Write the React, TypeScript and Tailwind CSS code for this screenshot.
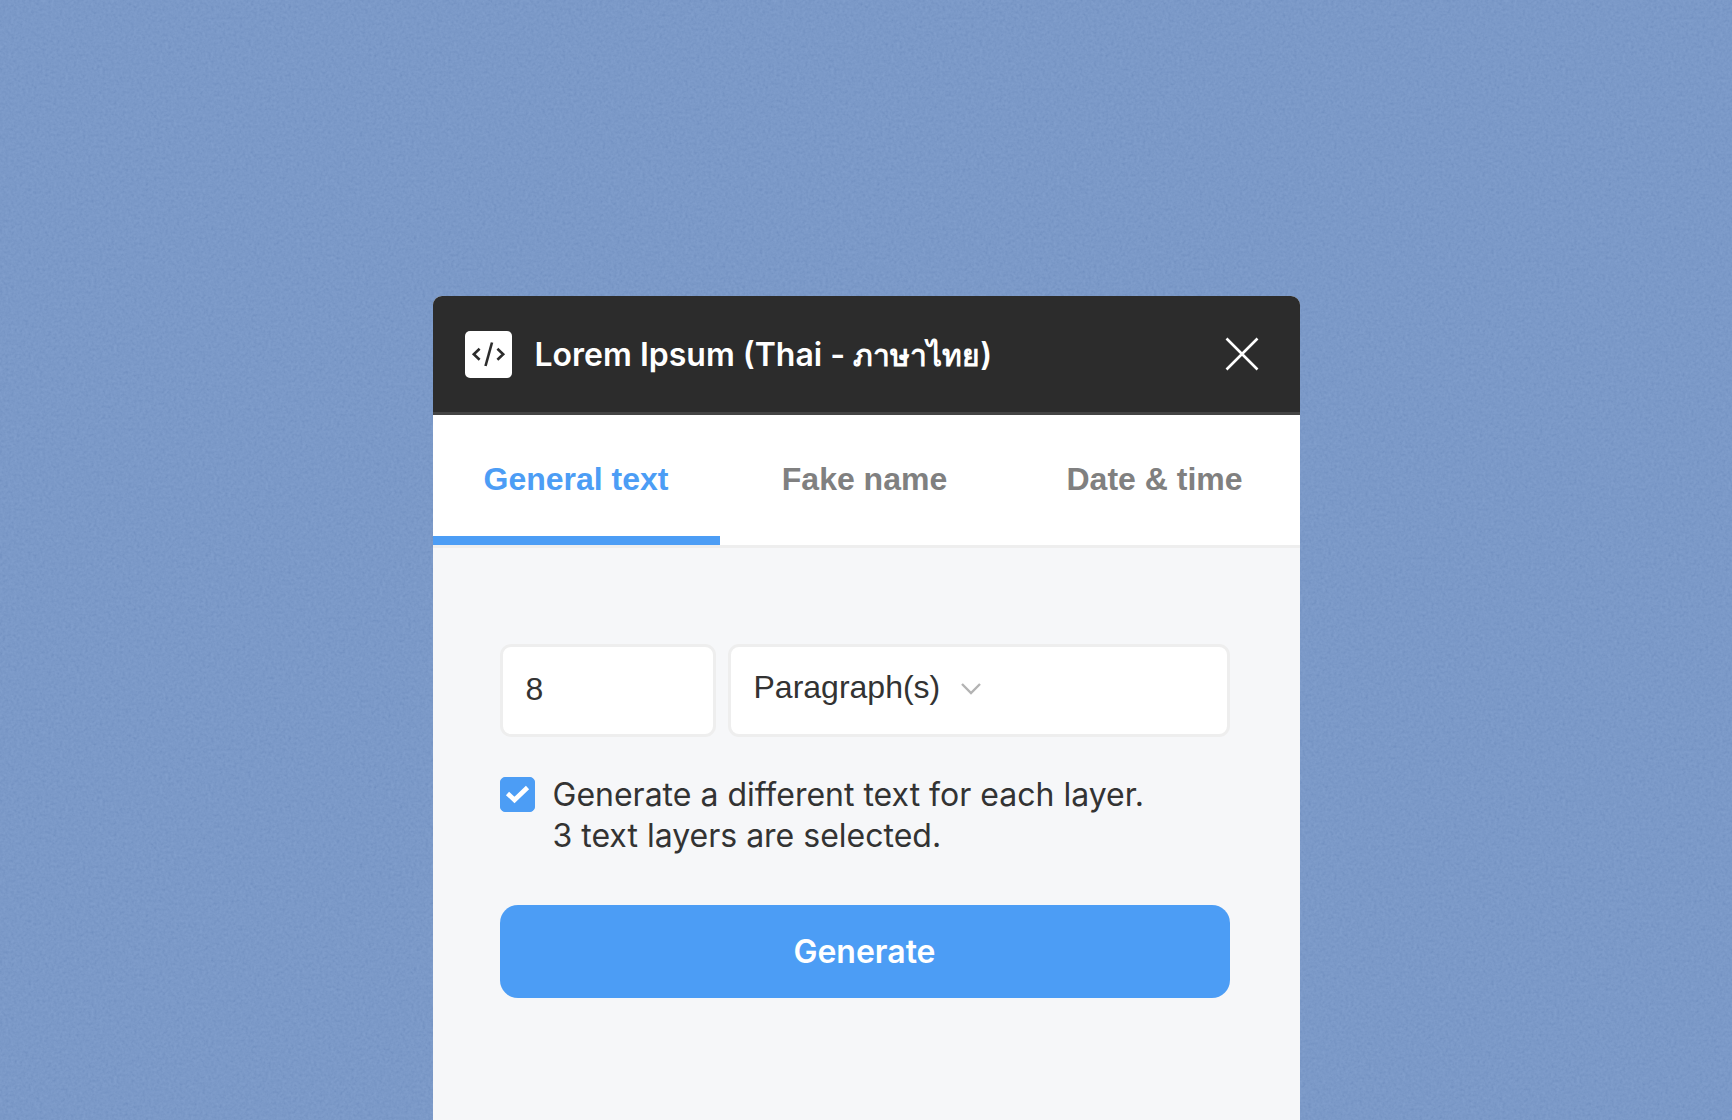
import { useState } from "react";

const tabs = ["General text", "Fake name", "Date & time"];

function GrainBackdrop() {
  return (
    <svg className="absolute inset-0 h-full w-full opacity-15" aria-hidden="true">
      <filter id="grain">
        <feTurbulence type="fractalNoise" baseFrequency="0.35" numOctaves={2} seed={4} />
        <feColorMatrix values="0.5 0.5 0 0 0  0.5 0.5 0 0 0.05  0.5 0.5 0 0 0.25  0 0 0 0 1" />
      </filter>
      <rect width="100%" height="100%" filter="url(#grain)" />
    </svg>
  );
}

function CodeIcon() {
  return (
    <span className="flex size-[47px] items-center justify-center rounded-[5px] bg-white">
      <svg width="47" height="47" viewBox="0 0 47 47" fill="none" stroke="#2c2c2c" strokeWidth="2.6" aria-hidden="true">
        <path d="M14.6 17.8 8.8 23.3l5.8 5.5M32.4 17.8l5.8 5.5-5.8 5.5" />
        <path d="M27 11.5 20.5 35" />
      </svg>
    </span>
  );
}

function Header() {
  return (
    <header className="flex h-[119px] items-center border-b-3 border-[#444444] bg-[#2c2c2c] pr-10 pl-8">
      <CodeIcon />
      <h1 className="ml-[23px] flex-1 pt-px font-['Inter',sans-serif] text-[32px] leading-10 font-semibold text-white">
        Lorem Ipsum (Thai - <span className="text-[30px]">ภาษาไทย</span>)
      </h1>
      <button type="button" aria-label="Close">
        <svg width="36" height="36" viewBox="0 0 36 36" fill="none" stroke="#ffffff" strokeWidth="2.6" aria-hidden="true">
          <path d="M2.5 2.5l31 31M33.5 2.5l-31 31" />
        </svg>
      </button>
    </header>
  );
}

export default function App() {
  const [active, setActive] = useState(0);
  const [count, setCount] = useState("8");
  const [different, setDifferent] = useState(true);

  return (
    <div className="relative flex min-h-screen flex-col items-center bg-[#7092c4] pt-[296px]">
      <GrainBackdrop />
      <main className="relative flex w-full max-w-[867px] flex-1 flex-col overflow-hidden rounded-t-[9px] bg-[#f6f7f9]">
        <Header />
        <nav className="grid grid-cols-[287fr_290fr_290fr] border-b-3 border-[#eeeeee] bg-white">
          {tabs.map((tab, i) => (
            <button
              key={tab}
              type="button"
              onClick={() => setActive(i)}
              className={`h-[130px] border-b-9 pt-[7px] font-['Liberation_Sans',sans-serif] text-[32px] font-bold ${
                active === i ? "border-[#4c9df5] text-[#4c9df5]" : "border-transparent text-[#808080]"
              }`}
            >
              {tab}
            </button>
          ))}
        </nav>
        <form className="flex flex-col pt-24 pr-[70px] pl-[67px] text-[#333333]" onSubmit={(e) => e.preventDefault()}>
          <div className="flex gap-3 font-['Liberation_Sans',sans-serif] text-[32px]">
            <input
              type="text"
              aria-label="Amount"
              value={count}
              onChange={(e) => setCount(e.target.value)}
              className="h-[93px] w-[216px] rounded-[11px] border-3 border-[#eeeeee] bg-white px-[23px] pb-0.5"
            />
            <div className="flex h-[93px] flex-1 items-center rounded-[11px] border-3 border-[#eeeeee] bg-white px-[23px] pb-2">
              <select aria-label="Unit" className="appearance-none bg-transparent">
                <option>Paragraph(s)</option>
              </select>
              <svg className="mt-1 ml-5" width="20" height="14" viewBox="0 0 20 14" fill="none" stroke="#b3b3b3" strokeWidth="2.4" aria-hidden="true">
                <path d="M1 2l9 9 9-9" />
              </svg>
            </div>
          </div>
          <label className="mt-[37px] flex items-start gap-[18px] font-['Inter',sans-serif] text-[32px] leading-[41px]">
            <span className="relative mt-[3px] size-[35px] shrink-0">
              <input
                type="checkbox"
                checked={different}
                onChange={(e) => setDifferent(e.target.checked)}
                className="peer block size-[35px] appearance-none rounded-[5px] border border-[#4c9df5] bg-white checked:bg-[#4c9df5]"
              />
              <svg className="pointer-events-none absolute inset-0 hidden peer-checked:block" width="35" height="35" viewBox="0 0 35 35" fill="none" stroke="#ffffff" strokeWidth="4.6" aria-hidden="true">
                <path d="M7.5 16.5l7 6.5L27.5 10.5" />
              </svg>
            </span>
            <span>
              Generate a different text for each layer.
              <br />3 text layers are selected.
            </span>
          </label>
          <button
            type="submit"
            className="mt-[49px] h-[93px] rounded-[18px] bg-[#4c9df5] font-['Inter',sans-serif] text-[32px] font-semibold text-white"
          >
            Generate
          </button>
        </form>
      </main>
    </div>
  );
}
